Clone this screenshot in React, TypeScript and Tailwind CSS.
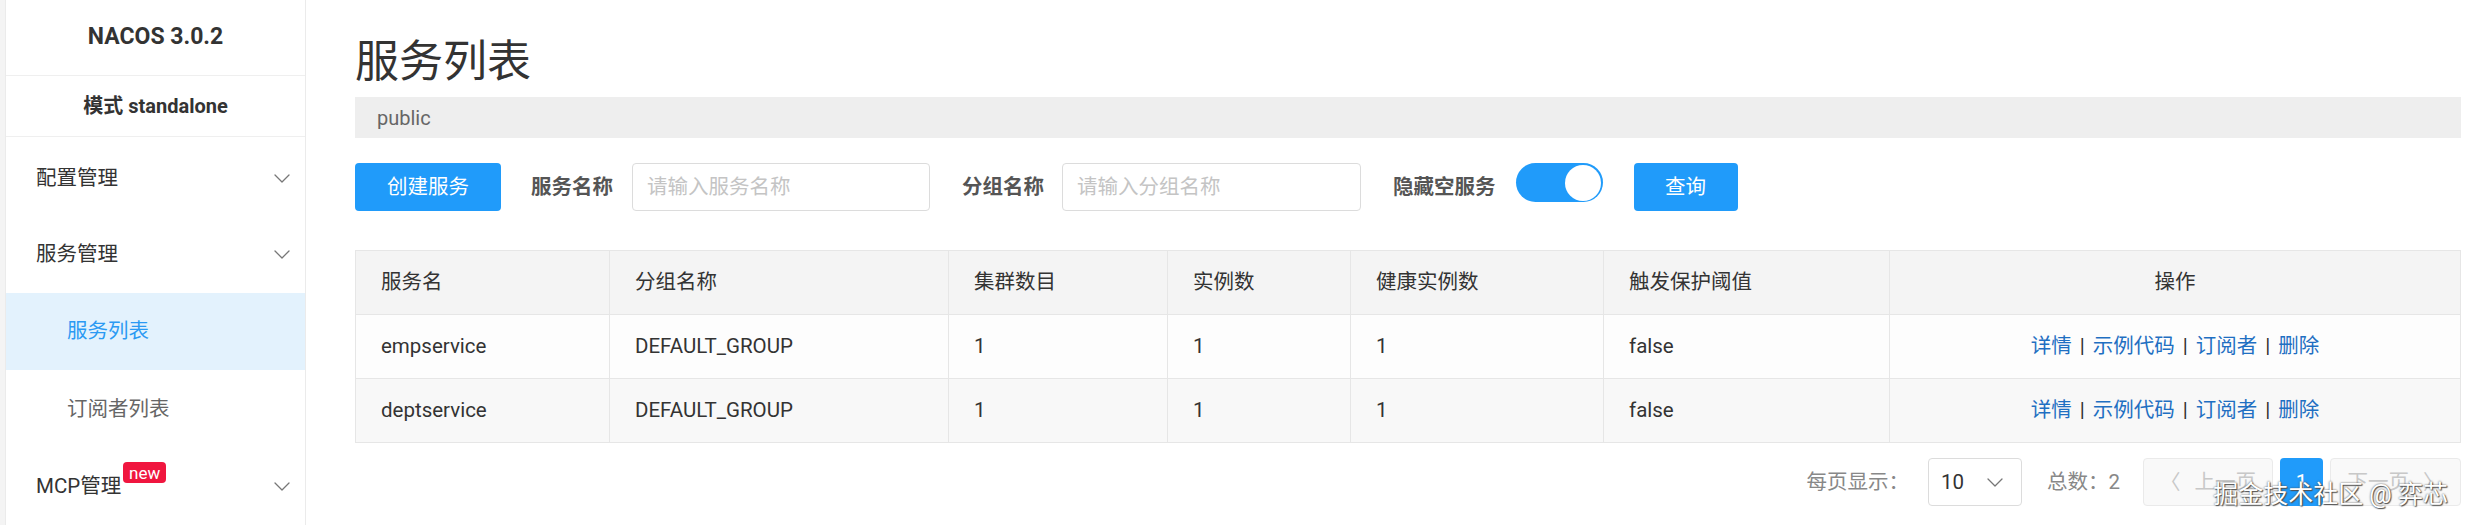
import React from "react";

const Chevron = ({ className = "" }: { className?: string }) => (
  <svg width="16" height="9" viewBox="0 0 16 9" className={className} fill="none">
    <path d="M1 1 L8 8 L15 1" stroke="#777" strokeWidth="1.3" strokeLinecap="round" strokeLinejoin="round" />
  </svg>
);

const cols = [254, 339, 219, 183, 253, 286];

const rows = [
  { name: "empservice", group: "DEFAULT_GROUP", bg: "bg-[#fdfdfd]" },
  { name: "deptservice", group: "DEFAULT_GROUP", bg: "bg-[#f8f8f8]" },
];

export default function App() {
  return (
    <div className="relative flex h-[525px] w-[2475px] overflow-hidden bg-white text-[#333] font-[Roboto,'Noto_Sans_CJK_SC',sans-serif]">
      <div className="w-[5px] shrink-0 bg-[#f4f4f4]" />
      <aside className="flex w-[301px] shrink-0 flex-col border-x border-[#ebebeb] bg-white">
        <div className="flex h-[77px] items-center justify-center border-b border-[#efefef] text-[23px] font-bold text-[#333]">
          NACOS 3.0.2
        </div>
        <div className="flex h-[61px] items-center justify-center border-b border-[#efefef] text-[20px] font-bold text-[#333]">
          模式 standalone
        </div>
        <div className="flex h-[80px] items-center justify-between pl-[30px] pr-[15px] pt-[3px] text-[20.5px] text-[#333]">
          <span>配置管理</span>
          <Chevron />
        </div>
        <div className="flex h-[77px] items-center justify-between pl-[30px] pr-[15px] text-[20.5px] text-[#333]">
          <span>服务管理</span>
          <Chevron />
        </div>
        <div className="flex h-[78px] items-center bg-[#e3f2fd] pl-[61px] text-[20.5px] text-[#2b9af3]">
          服务列表
        </div>
        <div className="flex h-[78px] items-center pl-[61px] text-[20.5px] text-[#666]">订阅者列表</div>
        <div className="flex h-[78px] items-center justify-between pl-[30px] pr-[15px] text-[20.5px] text-[#333]">
          <span className="relative leading-[24px]">
            MCP管理
            <span className="absolute left-full top-[-12px] ml-[2px] flex h-[21px] w-[43px] items-center justify-center rounded-[4px] bg-[#f0163f] text-[17px] leading-[20px] text-white">
              new
            </span>
          </span>
          <Chevron />
        </div>
      </aside>

      <main className="flex min-w-0 flex-1 flex-col pl-[49px] pr-[14px] pt-[40px]">
        <h1 className="h-[44px] text-[44px] font-normal leading-[44px] text-[#333]">服务列表</h1>
        <div className="mt-[13px] flex h-[41px] items-center bg-[#eeeeee] pl-[22px] text-[20px] text-[#666]">public</div>

        <div className="mt-[25px] flex h-[48px] items-center text-[20.5px]">
          <button className="h-[48px] w-[146px] rounded-[4px] bg-[#209bfa] text-white">创建服务</button>
          <span className="ml-[30px] font-bold text-[#555]">服务名称</span>
          <div className="ml-[19px] flex h-[48px] w-[298px] items-center rounded-[4px] border border-[#dcdcdc] pl-[14px] text-[#c4c4c4]">
            请输入服务名称
          </div>
          <span className="ml-[32px] font-bold text-[#555]">分组名称</span>
          <div className="ml-[18px] flex h-[48px] w-[299px] items-center rounded-[4px] border border-[#dcdcdc] pl-[14px] text-[#c4c4c4]">
            请输入分组名称
          </div>
          <span className="ml-[32px] font-bold text-[#555]">隐藏空服务</span>
          <div className="ml-[20px] flex h-[39px] w-[87px] items-center justify-end self-start rounded-full bg-[#209bfa] pr-[2px]">
            <div className="h-[36px] w-[36px] rounded-full bg-white" />
          </div>
          <button className="ml-[31px] h-[48px] w-[104px] rounded-[4px] bg-[#209bfa] text-white">查询</button>
        </div>

        <table className="mt-[39px] w-full table-fixed border-collapse text-[20.5px] text-[#333]">
          <colgroup>
            {cols.map((w, i) => (
              <col key={i} style={{ width: w }} />
            ))}
            <col />
          </colgroup>
          <thead>
            <tr className="h-[64px] bg-[#f4f4f4]">
              {["服务名", "分组名称", "集群数目", "实例数", "健康实例数", "触发保护阈值"].map((h) => (
                <th key={h} className="border border-[#e6e6e6] pl-[25px] text-left font-normal">
                  {h}
                </th>
              ))}
              <th className="border border-[#e6e6e6] text-center font-normal">操作</th>
            </tr>
          </thead>
          <tbody>
            {rows.map((r) => (
              <tr key={r.name} className={`h-[64px] ${r.bg}`}>
                <td className="border border-[#e6e6e6] pl-[25px]">{r.name}</td>
                <td className="border border-[#e6e6e6] pl-[25px]">{r.group}</td>
                <td className="border border-[#e6e6e6] pl-[25px]">1</td>
                <td className="border border-[#e6e6e6] pl-[25px]">1</td>
                <td className="border border-[#e6e6e6] pl-[25px]">1</td>
                <td className="border border-[#e6e6e6] pl-[25px]">false</td>
                <td className="border border-[#e6e6e6] text-center">
                  <span className="text-[#1f6fc2]">详情</span>
                  <span className="mx-[8px] text-[#333]">|</span>
                  <span className="text-[#1f6fc2]">示例代码</span>
                  <span className="mx-[8px] text-[#333]">|</span>
                  <span className="text-[#1f6fc2]">订阅者</span>
                  <span className="mx-[8px] text-[#333]">|</span>
                  <span className="text-[#1f6fc2]">删除</span>
                </td>
              </tr>
            ))}
          </tbody>
        </table>

        <div className="mt-[15px] flex h-[48px] items-center justify-end text-[20.5px]">
          <span className="text-[#888]">每页显示：</span>
          <div className="ml-[19px] flex h-[48px] w-[94px] items-center justify-between rounded-[4px] border border-[#dcdcdc] pl-[12px] pr-[18px] text-[#333]">
            <span>10</span>
            <Chevron />
          </div>
          <span className="ml-[25px] text-[#888]">总数：2</span>
          <div className="ml-[23px] flex h-[48px] w-[130px] items-center justify-center gap-[14px] rounded-[4px] border border-[#eaeaea] bg-[#f9f9f9] text-[#c8c8c8]">
            <span>〈</span>
            <span>上一页</span>
          </div>
          <div className="ml-[7px] flex h-[48px] w-[43px] items-center justify-center rounded-[4px] bg-[#209bfa] text-white">1</div>
          <div className="ml-[7px] flex h-[48px] w-[131px] items-center justify-center gap-[14px] rounded-[4px] border border-[#eaeaea] bg-[#f9f9f9] text-[#c8c8c8]">
            <span>下一页</span>
            <span>〉</span>
          </div>
        </div>
      </main>

      <div className="pointer-events-none absolute bottom-[16px] right-[27px] text-[25px] leading-[28px] text-white [text-shadow:0_0_2px_#444,1px_1px_1px_#555]">
        掘金技术社区 @ 弈芯
      </div>
    </div>
  );
}
